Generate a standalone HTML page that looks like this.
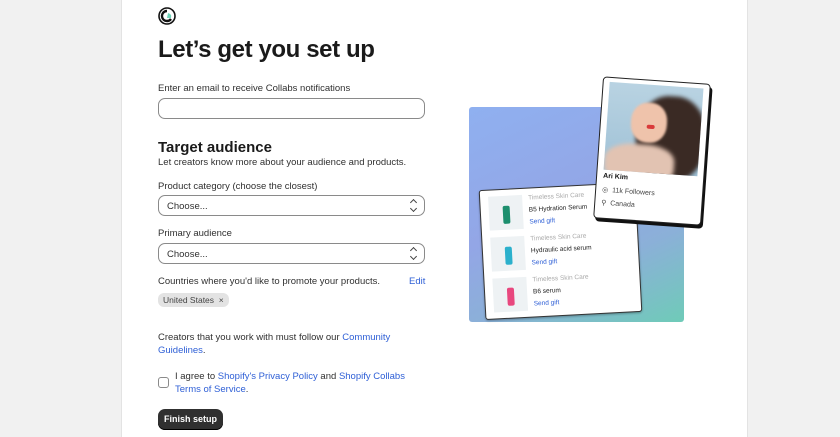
<!DOCTYPE html>
<html><head><style>
*{box-sizing:border-box;margin:0;padding:0}
body{width:840px;height:437px;background:#f1f1f1;font-family:"Liberation Sans",sans-serif;color:#303030;overflow:hidden;position:relative}
.panel{position:absolute;left:121px;top:0;width:627px;height:437px;background:#fff;border-left:1px solid #e3e3e3;border-right:1px solid #e3e3e3}
.a{position:absolute}
.lbl{font-size:9.5px;color:#303030}
.inp{position:absolute;left:158px;width:267px;height:21px;border:1px solid #8a8a8a;border-radius:7px;background:#fff;font-size:9.5px;padding:5px 8px}
.sel:after{content:"";position:absolute;right:8px;top:4px;width:4px;height:4px;border-left:1.2px solid #444;border-top:1.2px solid #444;transform:rotate(45deg)}
.sel:before{content:"";position:absolute;right:8px;top:10px;width:4px;height:4px;border-right:1.2px solid #444;border-bottom:1.2px solid #444;transform:rotate(45deg)}
.lk{color:#2e5fd6}
.p{font-size:6.5px}
</style></head><body>
<div class="panel"></div>
<svg class="a" style="left:158px;top:7px" width="18" height="18" viewBox="0 0 18 18"><circle cx="9" cy="9" r="8" fill="#fff" stroke="#111" stroke-width="1.6"/><path d="M9 4 A5 5 0 1 0 13 12" fill="none" stroke="#111" stroke-width="2.4"/><path d="M10 6 Q14 7 13 11 L9 11 Z" fill="#6fd3b8"/></svg>
<div class="a" style="left:158px;top:36px;font-size:24px;font-weight:bold;color:#1a1a1a;letter-spacing:-0.4px">Let’s get you set up</div>
<div class="a lbl" style="left:158px;top:83px">Enter an email to receive Collabs notifications</div>
<div class="inp" style="top:98px"></div>
<div class="a" style="left:158px;top:139px;font-size:15px;font-weight:bold;color:#1a1a1a">Target audience</div>
<div class="a lbl" style="left:158px;top:157px">Let creators know more about your audience and products.</div>
<div class="a lbl" style="left:158px;top:181px">Product category (choose the closest)</div>
<div class="inp sel" style="top:195px">Choose...</div>
<div class="a lbl" style="left:158px;top:228px">Primary audience</div>
<div class="inp sel" style="top:243px">Choose...</div>
<div class="a lbl" style="left:158px;top:276px">Countries where you'd like to promote your products.</div>
<div class="a lbl lk" style="left:409px;top:276px">Edit</div>
<div class="a" style="left:158px;top:293px;height:14px;padding:2px 5px;background:#e3e3e3;border-radius:6px;font-size:8.5px;color:#444">United States&nbsp; ×</div>
<div class="a lbl" style="left:158px;top:331px;line-height:13px;width:270px">Creators that you work with must follow our <span class="lk">Community Guidelines</span>.</div>
<div class="a" style="left:158px;top:377px;width:11px;height:11px;border:1px solid #8a8a8a;border-radius:3px"></div>
<div class="a lbl" style="left:175px;top:370px;line-height:13px;width:240px">I agree to <span class="lk">Shopify's Privacy Policy</span> and <span class="lk">Shopify Collabs Terms of Service</span>.</div>
<div class="a" style="left:158px;top:409px;width:65px;height:21px;background:#303030;border-radius:7px;color:#fff;font-size:9px;font-weight:bold;text-align:center;line-height:21px;box-shadow:inset 0 -1px 0 #000">Finish setup</div>

<div class="a" style="left:469px;top:107px;width:215px;height:215px;border-radius:3px;background:linear-gradient(155deg,#8fb0f0 0%,#93a6e6 45%,#8bb0d8 70%,#6fcbb8 100%)"></div>
<div class="a" style="left:482px;top:186px;width:157px;height:130px;background:#fff;border:1px solid #333;border-radius:3px;transform:rotate(-3deg);box-shadow:0 1px 2px rgba(0,0,0,.3)">
 <div class="a" style="left:8px;top:6px;width:34px;height:34px;background:#eef2f4"><div class="a" style="left:14px;top:10px;width:7px;height:18px;background:#1d8f6e;border-radius:2px"></div></div>
 <div class="a p" style="left:48px;top:6px;color:#aaa">Timeless Skin Care</div>
 <div class="a p" style="left:48px;top:18px;color:#222">B5 Hydration Serum</div>
 <div class="a p lk" style="left:48px;top:30px">Send gift</div>
 <div class="a" style="left:8px;top:47px;width:34px;height:34px;background:#eef2f4"><div class="a" style="left:14px;top:10px;width:7px;height:18px;background:#2bb0cc;border-radius:2px"></div></div>
 <div class="a p" style="left:48px;top:47px;color:#aaa">Timeless Skin Care</div>
 <div class="a p" style="left:48px;top:59px;color:#222">Hydraulic acid serum</div>
 <div class="a p lk" style="left:48px;top:71px">Send gift</div>
 <div class="a" style="left:8px;top:88px;width:34px;height:34px;background:#eef2f4"><div class="a" style="left:14px;top:10px;width:7px;height:18px;background:#e8477e;border-radius:2px"></div></div>
 <div class="a p" style="left:48px;top:88px;color:#aaa">Timeless Skin Care</div>
 <div class="a p" style="left:48px;top:100px;color:#222">B6 serum</div>
 <div class="a p lk" style="left:48px;top:112px">Send gift</div>
</div>
<div class="a" style="left:598px;top:80px;width:108px;height:142px;background:#fff;border:1.5px solid #222;border-radius:4px;transform:rotate(4deg);box-shadow:2px 3px 0 #111">
 <div class="a" style="left:6px;top:4px;width:94px;height:88px;overflow:hidden;background:linear-gradient(180deg,#b9d3e2,#9fc1d6)">
  <div class="a" style="left:30px;top:10px;width:70px;height:85px;border-radius:45%;background:#3a2a24;filter:blur(2px)"></div>
  <div class="a" style="left:24px;top:18px;width:36px;height:40px;border-radius:45%;background:#efc3ab;filter:blur(1px)"></div>
  <div class="a" style="left:0;top:60px;width:70px;height:40px;border-radius:40%;background:#e2c3b2;filter:blur(2px)"></div>
  <div class="a" style="left:40px;top:40px;width:8px;height:4px;border-radius:3px;background:#d93a3a"></div>
 </div>
 <div class="a" style="left:6px;top:95px;font-size:7px;font-weight:bold;color:#111">Ari Kim</div>
 <div class="a" style="left:6px;top:108px;font-size:7px;color:#444">◎&nbsp; 11k Followers</div>
 <div class="a" style="left:6px;top:121px;font-size:7px;color:#444">⚲&nbsp; Canada</div>
</div>
</body></html>
